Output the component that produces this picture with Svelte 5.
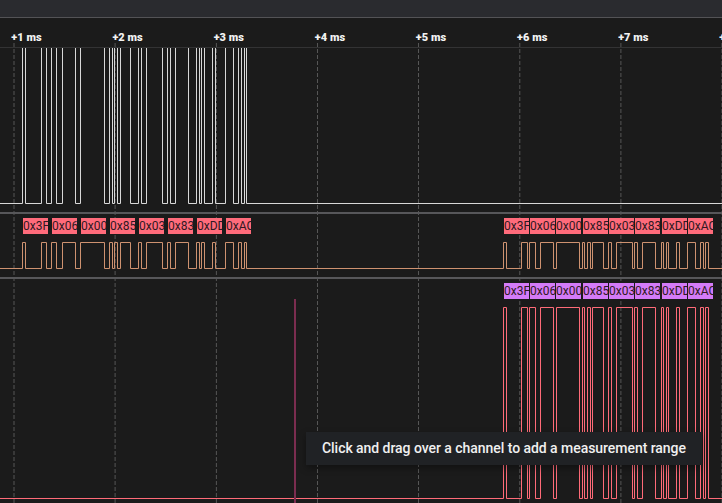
<script>
  const left = [22,25,41,46,51,56,62,75,80,104,109,112,114,117,120,130,138,141,146,162,167,170,175,188,196,199,201,204,212,215,225,233,238,241,244,246];
  const right = [503,506,521,527,529,535,540,553,556,579,582,584,587,590,592,603,608,611,616,632,634,637,642,655,661,663,666,668,676,679,687,695,700,703,705,708];
  const bytes = ['0x3F', '0x06', '0x00', '0x85', '0x03', '0x83', '0xDD', '0xAC'];
  const leftFrames = [23, 52, 81, 110, 139, 168, 197, 226];
  const rightFrames = [504, 530, 556, 583, 609, 635, 662, 688];
  const ticks = [14, 115.1, 216.4, 317.5, 418.5, 519.8, 620.9, 722];

  function wave(edges, high, low) {
    let d = `M-1 ${low + 0.5}`;
    edges.forEach((x, i) => {
      d += `H${x + 0.5}V${(i % 2 ? low : high) + 0.5}`;
    });
    return d + 'H723';
  }
</script>

{#snippet frames(starts, kind)}
  {#each starts as x, i}
    <span class="byte {kind}" style="left: {x}px">{bytes[i]}</span>
  {/each}
{/snippet}

<main>
  <div class="toolbar"></div>
  <header>
    {#each ticks as x, i}
      <span class="tick" style="left: {x - 2.7}px">+{i + 1} ms</span>
    {/each}
  </header>
  <svg class="grid" width="722" height="460">
    {#each ticks as x}
      <line x1={x} x2={x} y1="0" y2="460" />
    {/each}
  </svg>
  <section class="clock">
    <svg width="722" height="164"><path class="white" d={wave(left, -5, 155)} /></svg>
  </section>
  <section class="both">
    <div class="frames">
      {@render frames(leftFrames, 'rose')}
      {@render frames(rightFrames, 'rose')}
    </div>
    <svg width="722" height="43"><path class="orange" d={wave([...left, ...right], 8, 34)} /></svg>
  </section>
  <section class="last">
    <div class="frames">{@render frames(rightFrames, 'violet')}</div>
    <svg width="722" height="204"><path class="red" d={wave(right, 8, 199)} /></svg>
  </section>
  <div class="cursor"></div>
  <div class="hint">Click and drag over a channel to add a measurement range</div>
</main>

<style>
  main {
    position: relative;
    display: flex;
    flex-direction: column;
    width: 722px;
    height: 503px;
    overflow: hidden;
    background: #1b1b1b;
    font-family: Roboto, sans-serif;
  }
  .toolbar {
    flex: none;
    box-sizing: border-box;
    height: 18px;
    background: #2a2b2f;
    border-bottom: 1px solid #535356;
  }
  header {
    flex: none;
    position: relative;
    box-sizing: border-box;
    height: 30px;
    border-bottom: 1px solid #333334;
  }
  .tick {
    position: absolute;
    top: 13px;
    font-size: 11px;
    line-height: 13px;
    font-weight: 900;
    letter-spacing: 0.05px;
    color: #f2f2f2;
    white-space: nowrap;
  }
  .grid {
    position: absolute;
    left: 0;
    top: 43px;
  }
  .grid line {
    stroke: #565656;
    stroke-width: 1;
    stroke-dasharray: 4 2;
  }
  section {
    flex: none;
    position: relative;
    box-sizing: border-box;
    overflow: hidden;
  }
  svg { display: block; }
  .clock { height: 166px; border-bottom: 2px solid #57575a; }
  .both { height: 65px; border-bottom: 2px solid #57575a; }
  .last { height: 224px; }
  .frames {
    position: relative;
    height: 20px;
  }
  .byte {
    position: absolute;
    top: 4px;
    width: 25px;
    height: 16px;
    overflow: hidden;
    font-size: 12px;
    line-height: 16px;
    color: #301922;
  }
  .rose { background: #ff6b7b; }
  .violet { background: #d47bf8; }
  path { fill: none; stroke-width: 1; }
  .white { stroke: #d8d8d8; }
  .orange { stroke: #ce9270; }
  .red { stroke: #ff6b78; }
  .cursor {
    position: absolute;
    left: 294px;
    top: 299px;
    width: 2px;
    height: 204px;
    background: #7b2d50;
  }
  .hint {
    position: absolute;
    left: 306px;
    top: 432px;
    box-sizing: border-box;
    width: 396px;
    height: 33px;
    padding-left: 16px;
    background: #202225;
    box-shadow: 0 3px 7px rgba(0, 0, 0, 0.35);
    color: #f0f0f0;
    font-size: 14px;
    line-height: 33px;
    font-weight: 500;
    letter-spacing: -0.045px;
    white-space: nowrap;
  }
</style>
